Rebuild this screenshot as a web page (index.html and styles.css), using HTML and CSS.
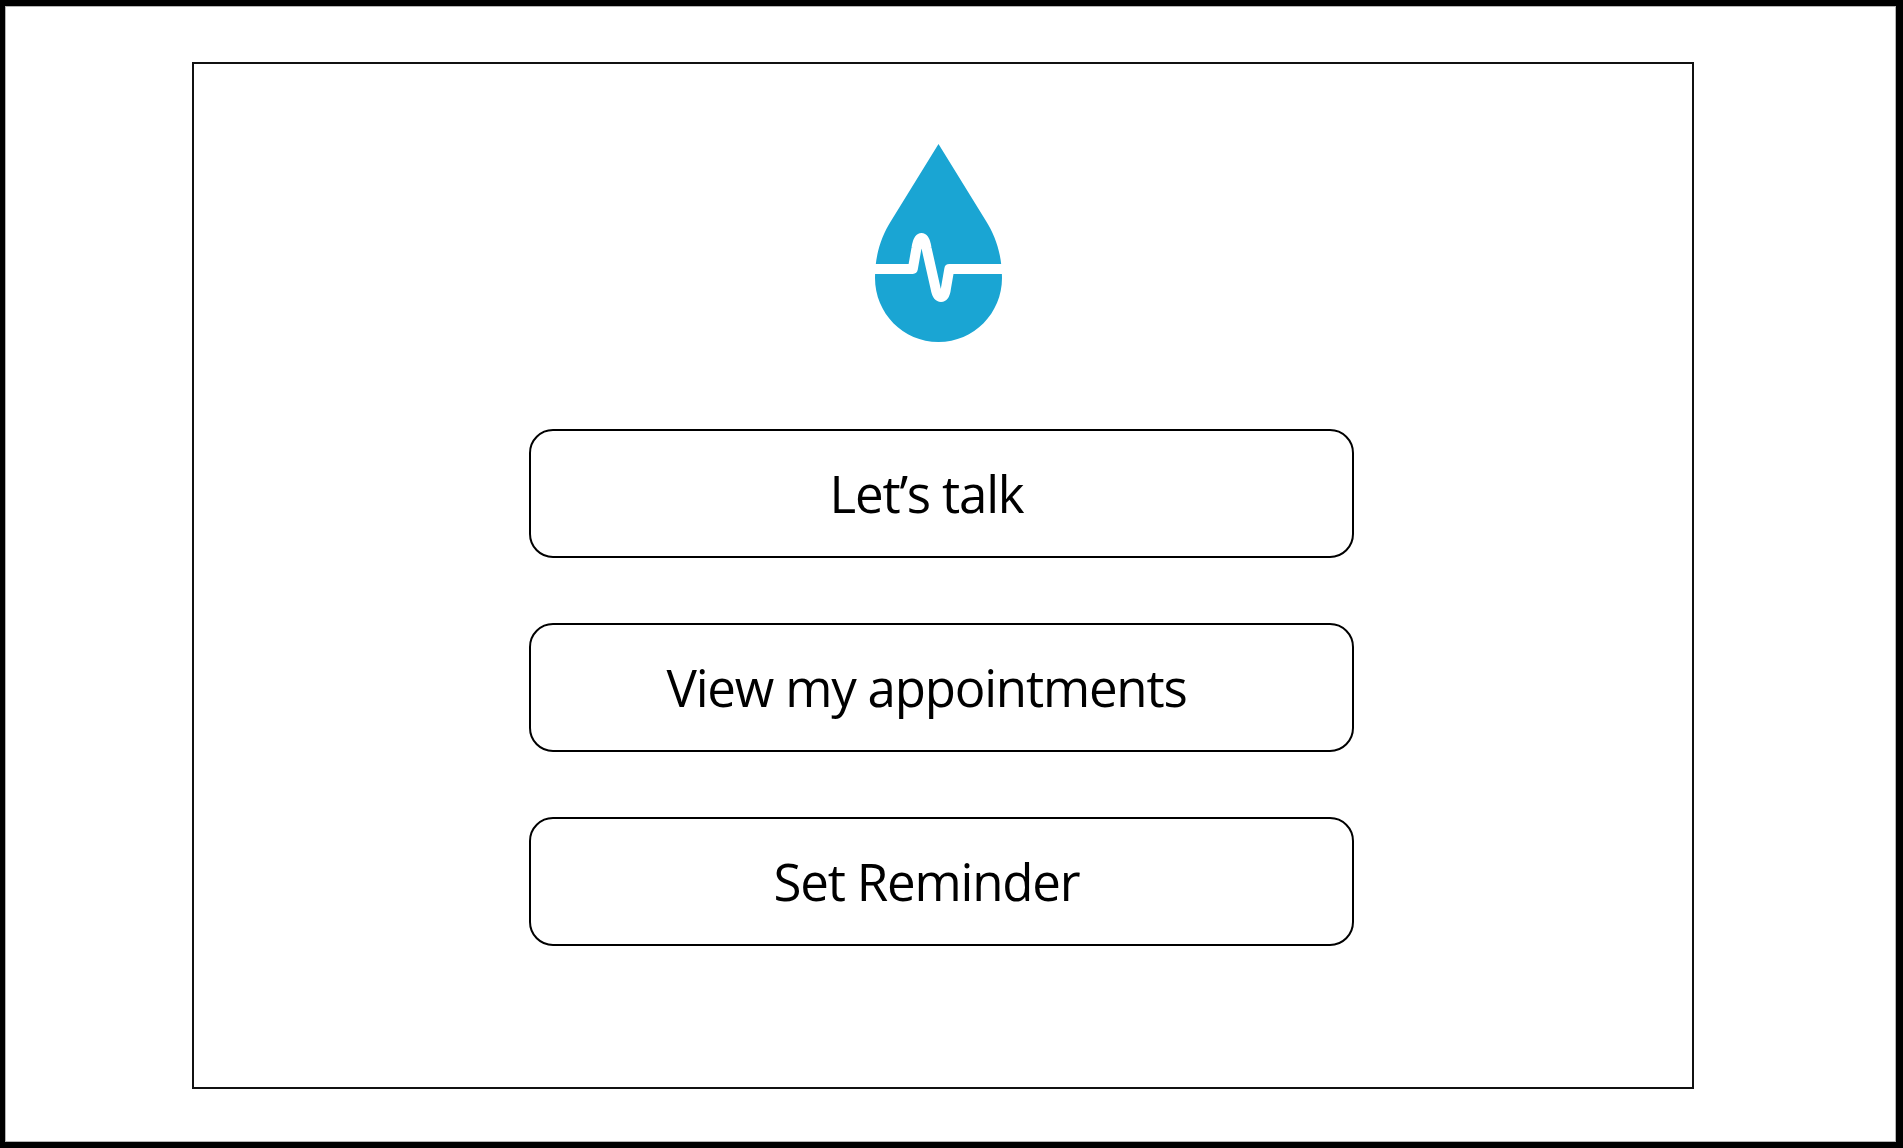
FILE: index.html
```html
<!doctype html>
<html lang="en">
<head>
	<meta charset="UTF-8">
	<title>Home</title>
	<link rel="stylesheet" href="styles.css">
</head>
<body>
	<div class="panel">
		<div class="frame">
			<svg class="logo" viewBox="0 0 128 200" width="128" height="200" aria-hidden="true">
				<path class="drop" d="M63.5 1 L16 78 C6 94 0 112 0 135 C0 170 28 199 63.5 199 C99 199 127 170 127 135 C127 112 121 94 111 78 Z"/>
				<path class="pulse" d="M-2 126 H37.8 L41.5 105 Q43 95 46.5 95 Q50 95 51.5 105 L60.5 145 Q62 154 66 154 Q70 154 71 145 L74.3 126 H130"/>
			</svg>
			<ul class="menu">
				<li class="btn">Let’s talk</li>
				<li class="btn">View my appointments</li>
				<li class="btn">Set Reminder</li>
			</ul>
		</div>
	</div>
</body>
</html>
```

FILE: styles.css
```css
*{
	margin:0;
	padding:0;
	box-sizing:border-box;
}
ul,li{
	list-style:none;
}
body{
	width:1903px;
	height:1148px;
	padding:6px 7px 6px 5px;
	background:#000;
	overflow:hidden;
}
.panel{
	height:100%;
	padding:55px 0 0 186px;
	background:#fff;
	border:1px solid #b5b5b5;
}
.frame{
	display:flex;
	flex-direction:column;
	align-items:flex-start;
	width:1502px;
	height:1027px;
	padding:79px 0 0 335px;
	border:2px solid #111;
}
.logo{
	display:block;
	margin-left:346px;
	overflow:visible;
}
.drop{
	fill:#1aa5d3;
}
.pulse{
	fill:none;
	stroke:#fff;
	stroke-width:10;
	stroke-linejoin:round;
}
.menu{
	display:flex;
	flex-direction:column;
	gap:65px;
	margin-top:86px;
}
.btn{
	display:flex;
	align-items:center;
	justify-content:center;
	width:825px;
	height:129px;
	padding:0 30px 2px 0;
	border:2px solid #000;
	border-radius:24px;
	font-family:"Open Sans",sans-serif;
	font-size:51px;
	letter-spacing:-1.2px;
	color:#000;
}
```
